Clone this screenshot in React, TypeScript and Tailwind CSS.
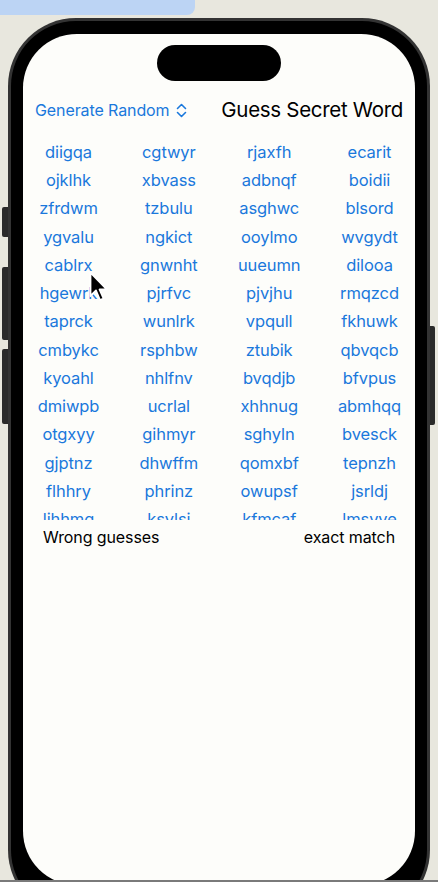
import React from "react";

const words: string[] = [
  "diigqa", "cgtwyr", "rjaxfh", "ecarit",
  "ojklhk", "xbvass", "adbnqf", "boidii",
  "zfrdwm", "tzbulu", "asghwc", "blsord",
  "ygvalu", "ngkict", "ooylmo", "wvgydt",
  "cablrx", "gnwnht", "uueumn", "dilooa",
  "hgewrk", "pjrfvc", "pjvjhu", "rmqzcd",
  "taprck", "wunlrk", "vpqull", "fkhuwk",
  "cmbykc", "rsphbw", "ztubik", "qbvqcb",
  "kyoahl", "nhlfnv", "bvqdjb", "bfvpus",
  "dmiwpb", "ucrlal", "xhhnug", "abmhqq",
  "otgxyy", "gihmyr", "sghyln", "bvesck",
  "gjptnz", "dhwffm", "qomxbf", "tepnzh",
  "flhhry", "phrinz", "owupsf", "jsrldj",
  "lihhmq", "ksvlsi", "kfmcaf", "lmsvye",
];

function Chevrons() {
  return (
    <svg width="11" height="15" viewBox="0 0 11 15" fill="none" stroke="#1a78dc" strokeWidth="1.6" strokeLinecap="round" strokeLinejoin="round">
      <path d="M1.5 5.5 L5.5 1.5 L9.5 5.5" />
      <path d="M1.5 9.5 L5.5 13.5 L9.5 9.5" />
    </svg>
  );
}

function Cursor() {
  return (
    <svg width="21" height="33" viewBox="0 0 21 33">
      <path d="M1.5 1.5 L1.5 25 L7 19.5 L11 29 L14.5 27.5 L10.5 18.5 L18 18.5 Z" fill="#000" stroke="#fff" strokeWidth="1.8" strokeLinejoin="round" />
    </svg>
  );
}

export default function App() {
  return (
    <div
      className="relative w-[438px] h-[882px] overflow-hidden bg-[#e8e7de]"
      style={{ fontFamily: "Inter, 'Noto Sans', sans-serif" }}
    >
      {/* top-left blue window remnant */}
      <div className="absolute left-0 top-0 w-[195px] h-[15px] bg-[#bcd4f4] rounded-br-[8px]" />

      {/* phone */}
      <div className="pt-[18px] pl-[8px]">
        <div className="relative w-[422px] h-[900px] rounded-[68px] bg-[#333333] p-[3px]">
          {/* side buttons */}
          <div className="absolute left-[-6px] top-[189px] w-[6px] h-[30px] rounded-l-[2px] bg-[#2a2a2a]" />
          <div className="absolute left-[-6px] top-[249px] w-[6px] h-[73px] rounded-l-[2px] bg-[#2a2a2a]" />
          <div className="absolute left-[-6px] top-[331px] w-[6px] h-[75px] rounded-l-[2px] bg-[#2a2a2a]" />
          <div className="absolute right-[-5px] top-[308px] w-[5px] h-[99px] rounded-r-[2px] bg-[#2a2a2a]" />

          <div className="w-full h-full rounded-[65px] bg-black pt-[13px] pl-[12px] pr-[6px]">
            <div className="relative w-[392px] h-[851px] rounded-[54px] bg-[#fdfdfa] overflow-hidden flex flex-col">
              {/* dynamic island */}
              <div className="mt-[11px] h-[36px] flex justify-center">
                <div className="w-[124px] h-[36px] rounded-full bg-black" />
              </div>

              {/* header */}
              <div className="mt-[15px] h-[28px] px-[12px] flex items-center justify-between">
                <div className="flex items-center gap-[6px] text-[16px] text-[#1a78dc] tracking-[-0.1px]">
                  <span>Generate Random</span>
                  <Chevrons />
                </div>
                <div className="text-[20.5px] text-black tracking-[-0.3px]">Guess Secret Word</div>
              </div>

              {/* scrolling list */}
              <div className="mt-[4px] h-[392px] overflow-hidden pt-[10px] px-[20px]">
                <div className="grid grid-cols-[repeat(4,51px)] justify-between">
                  {words.map((w, i) => (
                    <div key={i} className="h-[28.25px] flex items-center justify-center whitespace-nowrap text-[16.5px] text-[#1a78dc] tracking-[-0.1px]">
                      {w}
                    </div>
                  ))}
                </div>
              </div>

              {/* footer */}
              <div className="h-[34px] px-[20px] flex items-center justify-between text-[16px] text-black tracking-[-0.1px]">
                <span>Wrong guesses</span>
                <span>exact match</span>
              </div>
            </div>
          </div>
        </div>
      </div>

      {/* mouse cursor */}
      <div className="absolute left-[89px] top-[271px]">
        <Cursor />
      </div>

      {/* bottom strip */}
      <div className="absolute left-0 bottom-0 w-full h-[2px] bg-[#7a7a7a]" />
    </div>
  );
}
